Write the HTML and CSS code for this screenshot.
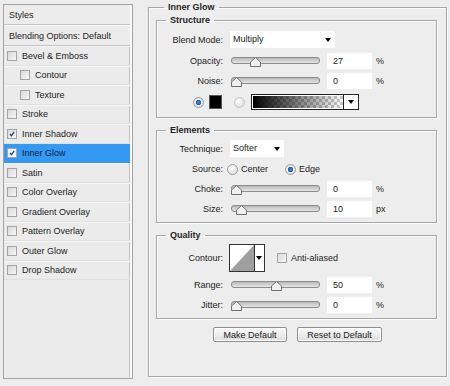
FILE: index.html
```html
<!doctype html>
<html>
<head>
<link rel="stylesheet" href="styles.css">
</head>
<body>
<div class="dialog">
	<div class="styles-list">
		<div class="list-head">Styles</div>
		<div class="list-head">Blending Options: Default</div>
		<div class="list-row"><span class="check"></span>Bevel &amp; Emboss</div>
		<div class="list-row sub"><span class="check"></span>Contour</div>
		<div class="list-row sub"><span class="check"></span>Texture</div>
		<div class="list-row"><span class="check"></span>Stroke</div>
		<div class="list-row"><span class="check"><svg viewBox="0 0 10 10"><polyline points="2.5,5 4.3,7.2 7.8,2.2"/></svg></span>Inner Shadow</div>
		<div class="list-row selected"><span class="check"><svg viewBox="0 0 10 10"><polyline points="2.5,5 4.3,7.2 7.8,2.2"/></svg></span>Inner Glow</div>
		<div class="list-row"><span class="check"></span>Satin</div>
		<div class="list-row"><span class="check"></span>Color Overlay</div>
		<div class="list-row"><span class="check"></span>Gradient Overlay</div>
		<div class="list-row"><span class="check"></span>Pattern Overlay</div>
		<div class="list-row"><span class="check"></span>Outer Glow</div>
		<div class="list-row"><span class="check"></span>Drop Shadow</div>
	</div>

	<div class="effect">
		<fieldset class="group outer">
			<legend>Inner Glow</legend>

			<fieldset class="group structure">
				<legend>Structure</legend>
				<div class="row pick">
					<span class="lbl">Blend Mode:</span>
					<div class="select blend">Multiply<i class="arrow"></i></div>
				</div>
				<div class="row">
					<span class="lbl">Opacity:</span>
					<div class="slider"><svg class="thumb" style="left:27%" viewBox="0 0 11 10"><polygon points="5.5,0.5 10.5,5 10.5,9.5 0.5,9.5 0.5,5"/></svg></div>
					<span class="num">27</span><span class="unit">%</span>
				</div>
				<div class="row">
					<span class="lbl">Noise:</span>
					<div class="slider"><svg class="thumb start" viewBox="0 0 11 10"><polygon points="5.5,0.5 10.5,5 10.5,9.5 0.5,9.5 0.5,5"/></svg></div>
					<span class="num">0</span><span class="unit">%</span>
				</div>
				<div class="row colors">
					<span class="radio on"></span>
					<span class="swatch"></span>
					<span class="radio"></span>
					<div class="gradient"><span class="ramp"></span><i class="arrow"></i></div>
				</div>
			</fieldset>

			<fieldset class="group elements">
				<legend>Elements</legend>
				<div class="row pick">
					<span class="lbl">Technique:</span>
					<div class="select technique">Softer<i class="arrow"></i></div>
				</div>
				<div class="row source">
					<span class="lbl">Source:</span>
					<span class="radio"></span><span class="opt">Center</span>
					<span class="radio on"></span><span class="opt">Edge</span>
				</div>
				<div class="row">
					<span class="lbl">Choke:</span>
					<div class="slider"><svg class="thumb start" viewBox="0 0 11 10"><polygon points="5.5,0.5 10.5,5 10.5,9.5 0.5,9.5 0.5,5"/></svg></div>
					<span class="num">0</span><span class="unit">%</span>
				</div>
				<div class="row">
					<span class="lbl">Size:</span>
					<div class="slider"><svg class="thumb" style="left:11%" viewBox="0 0 11 10"><polygon points="5.5,0.5 10.5,5 10.5,9.5 0.5,9.5 0.5,5"/></svg></div>
					<span class="num">10</span><span class="unit">px</span>
				</div>
			</fieldset>

			<fieldset class="group quality">
				<legend>Quality</legend>
				<div class="row contour-row">
					<span class="lbl">Contour:</span>
					<div class="contour">
						<svg class="curve" viewBox="0 0 26 26" preserveAspectRatio="none"><polygon points="0,26 26,0 26,26"/></svg>
						<i class="arrow"></i>
					</div>
					<span class="check"></span><span class="opt">Anti-aliased</span>
				</div>
				<div class="row">
					<span class="lbl">Range:</span>
					<div class="slider"><svg class="thumb" style="left:50%" viewBox="0 0 11 10"><polygon points="5.5,0.5 10.5,5 10.5,9.5 0.5,9.5 0.5,5"/></svg></div>
					<span class="num">50</span><span class="unit">%</span>
				</div>
				<div class="row">
					<span class="lbl">Jitter:</span>
					<div class="slider"><svg class="thumb start" viewBox="0 0 11 10"><polygon points="5.5,0.5 10.5,5 10.5,9.5 0.5,9.5 0.5,5"/></svg></div>
					<span class="num">0</span><span class="unit">%</span>
				</div>
			</fieldset>

			<div class="buttons">
				<button class="btn make">Make Default</button>
				<button class="btn reset">Reset to Default</button>
			</div>
		</fieldset>
	</div>
</div>
</body>
</html>
```

FILE: styles.css
```css
*{
	box-sizing:border-box;
}
body{
	margin:0;
	background:#ededed;
	font-family:"Liberation Sans", Arial, sans-serif;
	font-size:9px;
	color:#222;
}
.dialog{
	display:flex;
	padding-left:3px;
	width:450px;
	height:386px;
}

/* left list of styles */
.styles-list{
	margin-top:4px;
	width:130px;
	height:375px;
	border:1px solid #a3a3a3;
	box-shadow:inset -2px 0 0 #f8f8f8, inset -3px 0 0 #c4c4c4;
	background:#ebebeb;
}
.list-head{
	height:20px;
	padding-left:5px;
	line-height:20px;
	border-bottom:1px solid #c2c2c2;
	margin-right:2px;
	background:#ececec;
}
.list-head + .list-head{
	height:21px;
	border-top:1px solid #fafafa;
}
.list-row{
	display:flex;
	align-items:center;
	height:19.5px;
	padding-left:3px;
	margin-right:2px;
	border-bottom:1px solid #e0e0e0;
	border-top:1px solid #f6f6f6;
}
.list-row.sub{
	padding-left:16px;
}
.list-row.selected{
	background:#3399f3;
	border-color:#3399f3;
	color:#10203a;
}
.check{
	display:inline-block;
	flex:none;
	width:10px;
	height:10px;
	margin-right:5px;
	border:1px solid #a4a4a4;
	background:linear-gradient(135deg,#d8d8d8,#f7f7f7);
}
.check svg{
	display:block;
	width:8px;
	height:8px;
	fill:none;
	stroke:#1c3d7a;
	stroke-width:1.6;
}
.selected .check{
	background:#f4f4f4;
}

/* right panel */
.effect{
	margin-left:15px;
	margin-top:2px;
	width:299px;
}
.group{
	margin:0;
	padding:0 0 5px 0;
	border:1px solid #a6a6a6;
	box-shadow:1px 1px 0 #fbfbfb, inset 1px 1px 0 #fbfbfb;
}
.group legend{
	padding:0 4px;
	line-height:11px;
	font-weight:bold;
	color:#1e1e1e;
}
.outer{
	height:375px;
	padding:0 9px 0 7px;
}
.outer > legend{
	margin-left:8px;
}
.group .group > legend{
	margin-left:9px;
}
.structure{
	margin-top:2px;
	padding-top:5px;
	padding-bottom:7px;
}
.elements{
	margin-top:7px;
	padding-top:4px;
}
.quality{
	margin-top:7px;
	padding-top:3px;
}
.row{
	display:flex;
	align-items:center;
	height:16px;
	margin-top:4px;
}
.row:first-of-type{
	margin-top:0;
}
.pick + .row,
.source,
.source + .row,
.contour-row + .row,
.colors{
	margin-top:5px;
}
.lbl{
	width:67px;
	padding-right:1px;
	text-align:right;
	flex:none;
	margin-right:6px;
}
.select{
	position:relative;
	height:17px;
	line-height:17px;
	padding-left:3px;
	background:#fff;
}
.pick{
	height:17px;
}
.blend{
	width:105px;
}
.technique{
	width:54px;
}
.arrow{
	position:absolute;
	right:4px;
	top:7px;
	width:0;
	height:0;
	border-left:3px solid transparent;
	border-right:3px solid transparent;
	border-top:4px solid #000;
}
.slider{
	position:relative;
	width:89px;
	height:16px;
	margin-left:1px;
}
.slider::before{
	content:"";
	position:absolute;
	left:0;
	right:0;
	top:4px;
	height:5px;
	border:1px solid #8c8c8c;
	border-radius:3px;
	background:linear-gradient(#b9b9b9,#e6e6e6);
}
.thumb{
	position:absolute;
	top:4px;
	width:11px;
	height:10px;
	margin-left:-5px;
	fill:#f0f0f0;
	stroke:#6f6f6f;
	stroke-width:1;
}
.thumb.start{
	left:0;
	margin-left:0;
}
.num{
	width:45px;
	height:16px;
	margin-left:7px;
	padding-left:6px;
	line-height:16px;
	background:#fff;
}
.unit{
	margin-left:4px;
}
.radio{
	display:inline-block;
	flex:none;
	width:11px;
	height:11px;
	border-radius:50%;
	border:1px solid #9c9c9c;
	background:radial-gradient(circle at 40% 35%,#fdfdfd,#d6d6d6);
}
.radio.on{
	background:radial-gradient(circle,#3f8ae0 0,#1b5fb8 2.5px,#f2f2f2 3px,#dcdcdc 5px);
}
.colors{
	padding-left:36px;
}
.colors .swatch{
	width:13px;
	height:14px;
	margin-left:5px;
	background:#000;
	border:1px solid #555;
}
.colors .swatch + .radio{
	margin-left:12px;
	border-color:#c4c4c4;
}
.gradient{
	position:relative;
	display:flex;
	width:108px;
	height:16px;
	margin-left:6px;
	border:1px solid #222;
	background:#fff;
}
.ramp{
	flex:1;
	border:1px solid #fff;
	background:linear-gradient(to right,#000,rgba(0,0,0,0)),
		repeating-conic-gradient(#c8c8c8 0 25%,#fff 0 50%) 0 0/6px 6px;
}
.gradient .arrow{
	position:static;
	align-self:center;
	margin:0 4px 0 4px;
}
.gradient::after{
	content:"";
	position:absolute;
	right:14px;
	top:0;
	bottom:0;
	border-left:1px solid #222;
}
.source{
	height:14px;
}
.source .radio{
	margin-left:-3px;
	margin-right:3px;
}
.source .opt + .radio{
	margin-left:17px;
}
.contour-row{
	height:28px;
}
.contour{
	position:relative;
	display:flex;
	width:36px;
	height:28px;
	margin-left:-1px;
	border:1px solid #333;
	background:#fff;
}
.curve{
	width:25px;
	height:26px;
	border-right:1px solid #333;
	fill:#9f9f9f;
}
.contour .arrow{
	top:11px;
	right:2px;
}
.contour-row .check{
	margin-left:12px;
	margin-right:4px;
}
.buttons{
	display:flex;
	justify-content:center;
	gap:10px;
	margin-top:8px;
	padding-left:2px;
}
.btn{
	height:15px;
	padding:0;
	font-family:"Liberation Sans", Arial, sans-serif;
	font-size:9px;
	color:#222;
	border:1px solid #8e8e8e;
	border-radius:2px;
	background:linear-gradient(#fafafa,#dedede);
	box-shadow:inset 0 0 0 1px #fff;
}
.make{
	width:74px;
}
.reset{
	width:85px;
}
```
